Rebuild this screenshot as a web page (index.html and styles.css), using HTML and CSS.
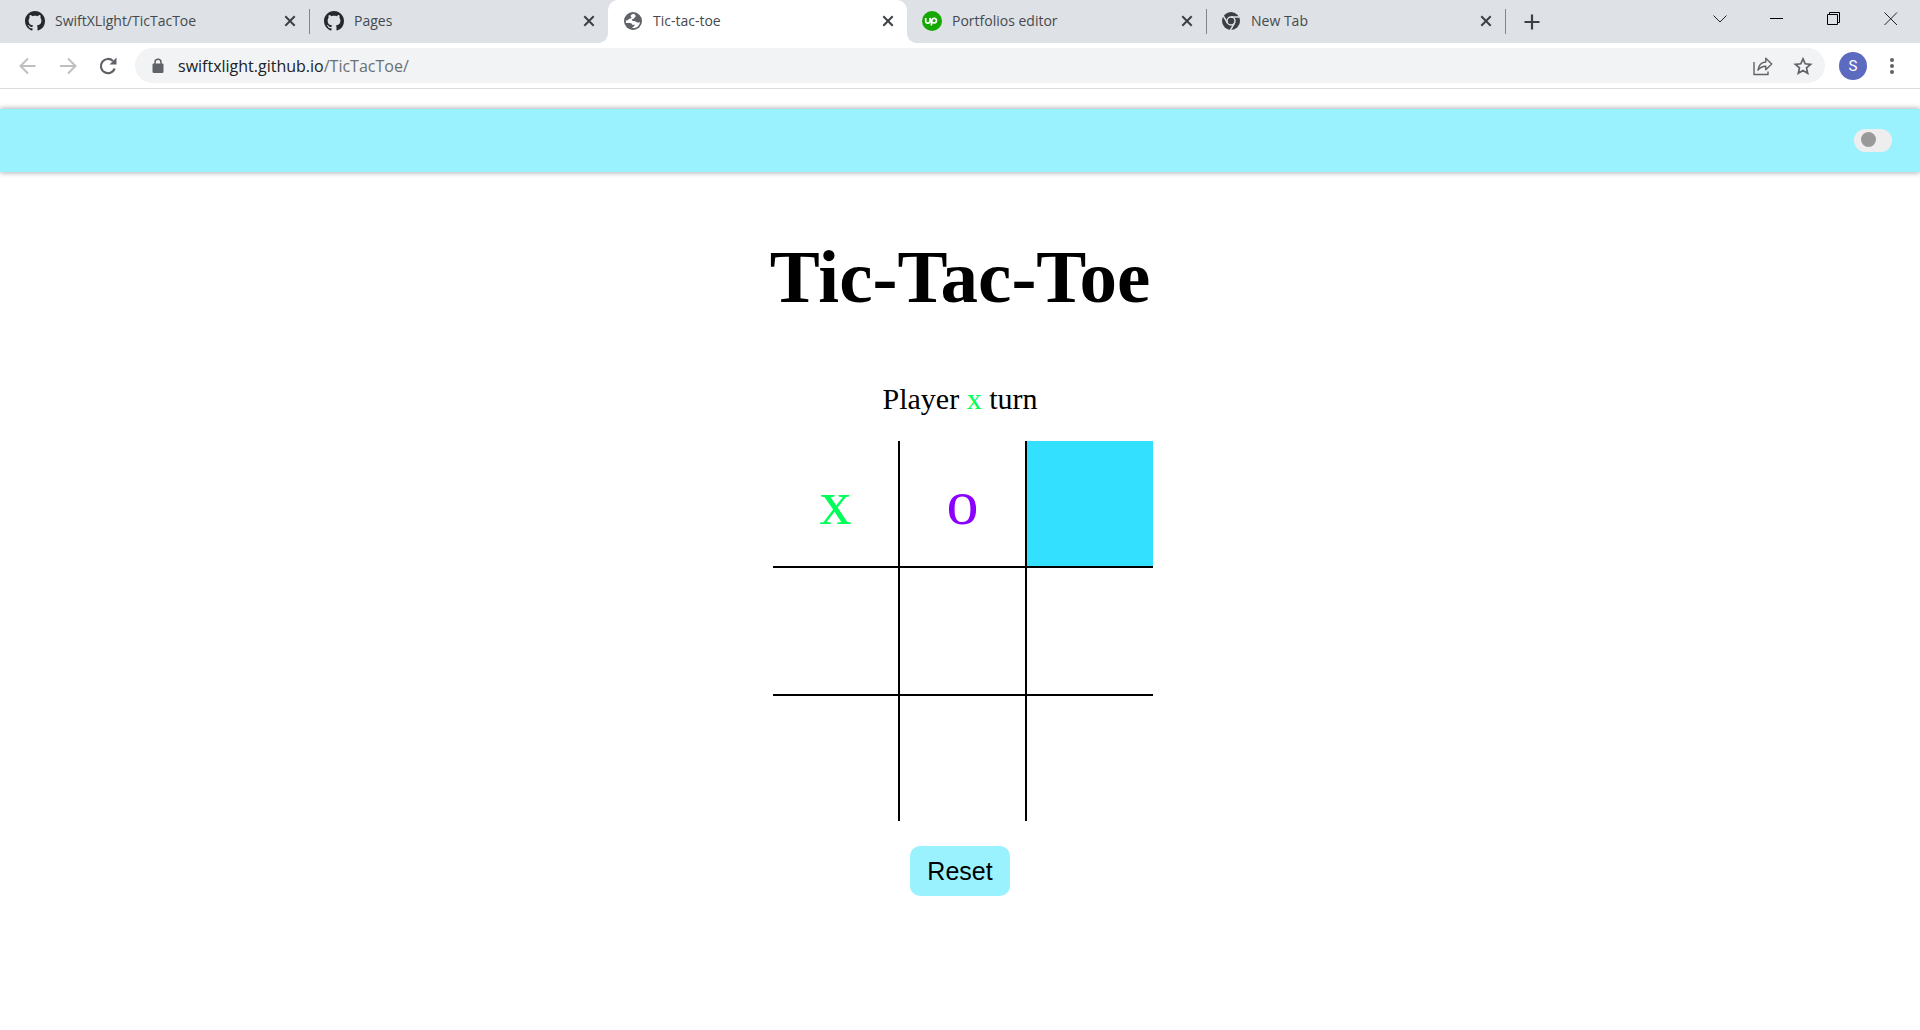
FILE: index.html
```html
<!DOCTYPE html>
<html lang="en">
<head>
<meta charset="utf-8">
<title>Tic-tac-toe</title>
<link rel="stylesheet" href="styles.css">
</head>
<body>
<svg class="defs" aria-hidden="true">
  <symbol id="github" viewBox="0 0 16 16"><path fill="#24292f" d="M8 0C3.58 0 0 3.58 0 8c0 3.54 2.29 6.53 5.47 7.59.4.07.55-.17.55-.38 0-.19-.01-.82-.01-1.49-2.01.37-2.53-.49-2.69-.94-.09-.23-.48-.94-.82-1.13-.28-.15-.68-.52-.01-.53.63-.01 1.08.58 1.23.82.72 1.21 1.87.87 2.33.66.07-.52.28-.87.51-1.07-1.78-.2-3.64-.89-3.64-3.95 0-.87.31-1.59.82-2.15-.08-.2-.36-1.02.08-2.12 0 0 .67-.21 2.2.82.64-.18 1.32-.27 2-.27s1.36.09 2 .27c1.53-1.04 2.2-.82 2.2-.82.44 1.1.16 1.92.08 2.12.51.56.82 1.27.82 2.15 0 3.07-1.87 3.75-3.65 3.95.29.25.54.73.54 1.48 0 1.07-.01 1.93-.01 2.2 0 .21.15.46.55.38A8.01 8.01 0 0 0 16 8c0-4.42-3.58-8-8-8z"/></symbol>
  <symbol id="cross" viewBox="0 0 12 12"><path d="M1.3 1.3l9.4 9.4M10.7 1.3l-9.4 9.4" stroke="#3c4043" stroke-width="2" fill="none"/></symbol>
</svg>

<header class="browser">
  <div class="tabstrip">
    <div class="tab">
      <svg class="favicon"><use href="#github"/></svg>
      <span class="tab-title">SwiftXLight/TicTacToe</span>
      <button class="tab-close" aria-label="Close tab"><svg width="12" height="12"><use href="#cross"/></svg></button>
    </div>
    <div class="tab before-active">
      <svg class="favicon"><use href="#github"/></svg>
      <span class="tab-title">Pages</span>
      <button class="tab-close" aria-label="Close tab"><svg width="12" height="12"><use href="#cross"/></svg></button>
    </div>
    <div class="tab active">
      <svg class="favicon" viewBox="0 0 20 20"><circle cx="10" cy="10" r="9" fill="#5f6368"/><path d="M11 2.800C7.800 3.300 7.200 5 8.200 5.900c.9.9-.1 1.500-1.200 1.700C5.500 7.900 5 9.600 2.800 9.800c0 1 .1 1.500.4 2.200h3.600c1.600 0 2.200.9 2.300 1.700h2.600c0 1.200-.8 2-2.200 2.200v1.200c4 .2 7.200-2.600 7.500-6.200-1.300.8-2.600.8-3.700 0-1.300-.9-2-1.100-3.200-1-1.300.1-1.600-1.300-.6-1.800.8-.4 1.700-.2 1.900-1.100.1-.9 1.200-.9 1.300-1.700.1-.8-.7-1.500-1.700-2.500z" fill="#fff"/></svg>
      <span class="tab-title">Tic-tac-toe</span>
      <button class="tab-close" aria-label="Close tab"><svg width="12" height="12"><use href="#cross"/></svg></button>
    </div>
    <div class="tab">
      <svg class="favicon" viewBox="0 0 20 20"><circle cx="10" cy="10" r="10" fill="#14a800"/><path d="M3.700 7v3a2.100 2.100 0 0 0 4.300 0V7c.6 2.800 2.100 4.900 4.200 4.900a2.300 2.300 0 1 0-2.200-3.100L9.300 14.500" fill="none" stroke="#fff" stroke-width="1.700"/></svg>
      <span class="tab-title">Portfolios editor</span>
      <button class="tab-close" aria-label="Close tab"><svg width="12" height="12"><use href="#cross"/></svg></button>
    </div>
    <div class="tab">
      <svg class="favicon" viewBox="0 0 20 20"><circle cx="10" cy="10" r="9" fill="#3c4043"/><circle cx="10" cy="10" r="4" fill="none" stroke="#dee1e6" stroke-width="1.500"/><path d="M10 5.900h8.300M6.500 12.100L2.300 4.900M13.500 12.100L9.400 19.200" stroke="#dee1e6" stroke-width="1.500"/></svg>
      <span class="tab-title">New Tab</span>
      <button class="tab-close" aria-label="Close tab"><svg width="12" height="12"><use href="#cross"/></svg></button>
    </div>
    <button class="new-tab" aria-label="New tab"><svg width="16" height="16" viewBox="0 0 16 16"><path d="M8 .5v15M.5 8h15" stroke="#3c4043" stroke-width="2.200"/></svg></button>
    <div class="window-controls">
      <button aria-label="Search tabs"><svg width="14" height="14" viewBox="0 0 14 14"><path d="M.5 3.500L7 10l6.500-6.500" fill="none" stroke="#222"/></svg></button>
      <button aria-label="Minimize"><svg width="14" height="14" viewBox="0 0 14 14"><path d="M0 6.500h13" stroke="#000"/></svg></button>
      <button aria-label="Restore"><svg width="14" height="14" viewBox="0 0 14 14"><path d="M.5 2.500h10v10H.5zM2.500 2V.5h10v10H11" fill="none" stroke="#000"/></svg></button>
      <button aria-label="Close"><svg width="14" height="14" viewBox="0 0 14 14"><path d="M.5.5L13 13M13 .5L.5 13" stroke="#222"/></svg></button>
    </div>
  </div>

  <div class="toolbar">
    <button class="tool" aria-label="Back"><svg width="20" height="20" viewBox="0 0 20 20"><path d="M17.500 10h-15M10 2.500L2.500 10l7.500 7.500" fill="none" stroke="#bdbfc1" stroke-width="2"/></svg></button>
    <button class="tool" aria-label="Forward"><svg width="20" height="20" viewBox="0 0 20 20"><path d="M2 10h15M10 2.500l7.500 7.500-7.500 7.500" fill="none" stroke="#bdbfc1" stroke-width="2"/></svg></button>
    <button class="tool" aria-label="Reload"><svg width="20" height="20" viewBox="0 0 20 20"><path d="M16.700 12.500A7.100 7.100 0 1 1 15 5" fill="none" stroke="#5f6368" stroke-width="2.200"/><path d="M18.500 1.500v7h-7z" fill="#5f6368"/></svg></button>
    <div class="omnibox">
      <svg class="lock" width="12" height="16" viewBox="0 0 12 16"><rect x=".5" y="5.500" width="11" height="9.500" rx="1.300" fill="#5f6368"/><path d="M3 6V4.300a3 3 0 0 1 6 0V6" fill="none" stroke="#5f6368" stroke-width="1.500"/></svg>
      <a class="url" href="#">swiftxlight.github.io<span class="path">/TicTacToe/</span></a>
      <button class="tool" aria-label="Share"><svg width="20" height="20" viewBox="0 0 20 20"><path d="M1 6v12.500h14V15.500" fill="none" stroke="#5f6368" stroke-width="1.400"/><path d="M5 14.200C5.600 9.500 8 6.300 12.800 6V2.300L18.700 8l-5.900 5.700v-3.500c-3.700 0-5.900 1.300-7.800 4z" fill="none" stroke="#5f6368" stroke-width="1.400" stroke-linejoin="round"/></svg></button>
      <button class="tool" aria-label="Bookmark"><svg width="20" height="20" viewBox="0 0 20 20"><path d="M10 2.800l2.200 5 5.400.5-4.100 3.600 1.200 5.300L10 14.400l-4.700 2.800 1.200-5.300-4.100-3.600 5.400-.5z" fill="none" stroke="#5f6368" stroke-width="1.700"/></svg></button>
    </div>
    <button class="avatar" aria-label="Profile">S</button>
    <button class="menu" aria-label="Menu"><svg width="6" height="18" viewBox="0 0 6 18"><g fill="#5f6368"><circle cx="3" cy="3" r="2"/><circle cx="3" cy="9" r="2"/><circle cx="3" cy="15" r="2"/></g></svg></button>
  </div>
</header>

<nav class="navbar">
  <input class="switch" type="checkbox" role="switch" aria-label="Dark mode">
</nav>

<main class="game">
  <h1>Tic-Tac-Toe</h1>
  <p class="status">Player <span class="x">x</span> turn</p>
  <div class="board">
    <button class="cell x">x</button>
    <button class="cell o">o</button>
    <button class="cell hovered" aria-label="Row 1, column 3"></button>
    <button class="cell" aria-label="Row 2, column 1"></button>
    <button class="cell" aria-label="Row 2, column 2"></button>
    <button class="cell" aria-label="Row 2, column 3"></button>
    <button class="cell" aria-label="Row 3, column 1"></button>
    <button class="cell" aria-label="Row 3, column 2"></button>
    <button class="cell" aria-label="Row 3, column 3"></button>
  </div>
  <button class="reset">Reset</button>
</main>
</body>
</html>
```
FILE: styles.css
```css
* {
  box-sizing: border-box;
}

body {
  margin: 0;
  background: #fff;
  font-family: "Liberation Serif", "Times New Roman", serif;
}

button {
  margin: 0;
  padding: 0;
  border: 0;
  background: none;
}

.defs {
  display: none;
}

/* Browser window */
.browser {
  border-bottom: 1px solid #d9dbdd;
  font-family: "Open Sans", "Segoe UI", sans-serif;
}

.tabstrip {
  display: flex;
  height: 43px;
  padding-left: 10px;
  background: #dee1e6;
}

.tab {
  position: relative;
  display: flex;
  flex: 0 1 299px;
  align-items: center;
  gap: 10px;
  min-width: 0;
  padding: 0 13px 1px 15px;
}

.tab::after {
  content: "";
  position: absolute;
  top: 9px;
  right: -1px;
  width: 1px;
  height: 25px;
  background: #80868b;
}

.before-active::after {
  display: none;
}

.active {
  border-radius: 10px 10px 0 0;
  background: #fff;
}

.active::before,
.active::after {
  content: "";
  position: absolute;
  top: auto;
  bottom: 0;
  width: 10px;
  height: 10px;
}

.active::before {
  left: -10px;
  background: radial-gradient(circle at 0 0, transparent 10px, #fff 10px);
}

.active::after {
  right: -10px;
  background: radial-gradient(circle at 100% 0, transparent 10px, #fff 10px);
}

.favicon {
  flex: none;
  width: 20px;
  height: 20px;
}

.tab-title {
  flex: 1;
  overflow: hidden;
  color: #45494d;
  font-size: 14px;
  line-height: 20px;
  white-space: nowrap;
}

.tab-close,
.new-tab,
.tool,
.menu {
  display: flex;
  align-items: center;
  justify-content: center;
}

.new-tab {
  width: 54px;
  flex: none;
}

.window-controls {
  display: flex;
  margin-right: 1px;
  margin-left: auto;
}

.window-controls button {
  display: flex;
  align-items: center;
  justify-content: center;
  width: 57px;
  height: 38px;
}

.toolbar {
  display: flex;
  align-items: center;
  height: 45px;
  padding: 0 25px 0 8px;
}

.tool {
  flex: none;
  width: 40px;
  height: 34px;
}

.omnibox {
  display: flex;
  flex: 1;
  align-items: center;
  height: 35px;
  margin: 0 14px 0 7px;
  padding: 0 2px 0 17px;
  border-radius: 18px;
  background: #f1f3f4;
}

.url {
  flex: 1;
  margin-left: 14px;
  color: #202124;
  font-size: 16px;
  line-height: 24px;
  text-decoration: none;
}

.path {
  color: #6b7075;
}

.avatar {
  width: 28px;
  height: 28px;
  margin-right: 22px;
  border-radius: 50%;
  background: #5c6bc0;
  color: #fff;
  font: 15px/28px Roboto, sans-serif;
}

/* Page */
.navbar {
  display: flex;
  justify-content: flex-end;
  height: 63px;
  margin-top: 20px;
  padding: 20px 28px;
  background: #9af2ff;
  box-shadow: 0 0 6px rgba(0, 0, 0, 0.4);
}

.switch {
  appearance: none;
  width: 38px;
  height: 23px;
  margin: 0;
  padding: 3px 7px;
  border-radius: 12px;
  background: #eee;
}

.switch::before {
  content: "";
  display: block;
  width: 15px;
  height: 15px;
  border-radius: 50%;
  background: #999;
}

.game {
  display: flex;
  flex-direction: column;
  align-items: center;
}

h1 {
  margin: 63px 0;
  font-size: 75px;
  line-height: 84px;
}

.status {
  margin: 0;
  font-size: 30px;
  line-height: 34px;
}

.board {
  display: grid;
  grid-template-columns: 127px 127px 126px;
  grid-template-rows: 127px 128px 125px;
  margin: 25px 0 25px 6px;
}

.cell {
  padding-bottom: 2px;
  border: 0 solid #000;
  font-family: inherit;
  font-size: 64px;
  line-height: 72px;
}

.cell:not(:nth-child(3n)) {
  border-right-width: 2px;
}

.cell:nth-child(-n + 6) {
  border-bottom-width: 2px;
}

.x {
  color: #00ff59;
}

.o {
  color: #8c00ff;
}

.hovered {
  background: #33e0ff;
}

.reset {
  width: 100px;
  height: 50px;
  border-radius: 10px;
  background: #9af2ff;
  color: #000;
  font: 25px/30px "Liberation Sans", Arial, sans-serif;
}
```
